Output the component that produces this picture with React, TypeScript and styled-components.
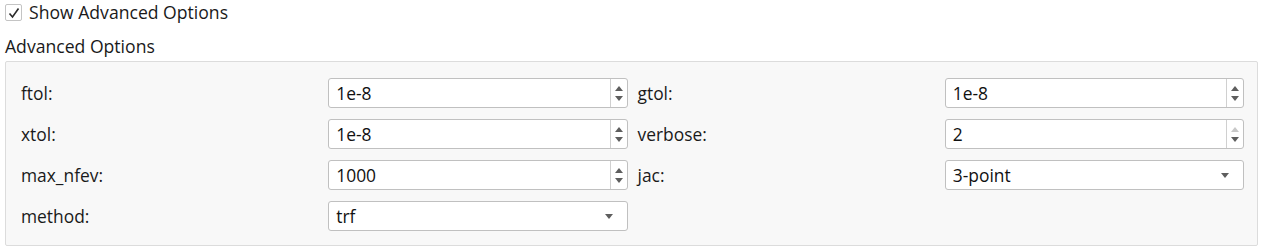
import React from "react";
import styled, { createGlobalStyle } from "styled-components";

const Global = createGlobalStyle`
  html, body { margin: 0; padding: 0; background: #ffffff; }
  body { font-family: "Open Sans", "Noto Sans", sans-serif; color: #1a1a1a; }
`;

const Page = styled.div`
  display: flex;
  flex-direction: column;
  padding: 4px 5px 0 5px;
  width: 1263px;
  box-sizing: border-box;
`;

const CheckRow = styled.label`
  display: flex;
  align-items: center;
  gap: 7px;
  height: 17px;
  font-size: 17.6px;
  line-height: 17px;
`;

const CheckBox = styled.span`
  width: 15px;
  height: 15px;
  border: 1px solid #c4c4c4;
  border-radius: 2px;
  background: #ffffff;
  display: flex;
  align-items: center;
  justify-content: center;
  flex-shrink: 0;
`;

const GroupTitle = styled.div`
  font-size: 17.6px;
  line-height: 20px;
  margin-top: 15px;
  height: 22px;
`;

const GroupBox = styled.div`
  margin-top: 3px;
  width: 1253px;
  box-sizing: border-box;
  border: 1px solid #dcdcdc;
  border-radius: 2px;
  background: #f8f8f8;
  padding: 16px 13px 14px 14px;
  display: grid;
  grid-template-columns: repeat(4, 1fr);
  column-gap: 9px;
  row-gap: 11px;
  align-items: center;
`;

const FieldLabel = styled.div`
  font-size: 17.4px;
  padding-left: 1px;
`;

const Field = styled.div`
  height: 30px;
  box-sizing: border-box;
  border: 1px solid #c0c0c0;
  border-radius: 3px;
  background: #ffffff;
  display: flex;
  align-items: stretch;
`;

const FieldText = styled.div`
  flex: 1;
  display: flex;
  align-items: center;
  padding-left: 7px;
  font-size: 17.4px;
  color: #111;
`;

const Spin = styled.div`
  width: 16px;
  border-left: 1px solid #d0d0d0;
  display: flex;
  flex-direction: column;
  align-items: center;
  justify-content: center;
  gap: 5px;
`;

const Arrow = styled.span<{ $dir: "up" | "down"; $disabled?: boolean }>`
  width: 0;
  height: 0;
  border-left: 4px solid transparent;
  border-right: 4px solid transparent;
  ${(p) =>
    p.$dir === "up"
      ? `border-bottom: 5px solid ${p.$disabled ? "#c8c8c8" : "#5e5e5e"};`
      : `border-top: 5px solid ${p.$disabled ? "#c8c8c8" : "#5e5e5e"};`}
`;

const ComboArrow = styled.div`
  width: 36px;
  display: flex;
  align-items: center;
  justify-content: center;
`;

type SpinProps = { value: string; upDisabled?: boolean };
const SpinBox = ({ value, upDisabled }: SpinProps) => (
  <Field>
    <FieldText>{value}</FieldText>
    <Spin>
      <Arrow $dir="up" $disabled={upDisabled} />
      <Arrow $dir="down" />
    </Spin>
  </Field>
);

const Combo = ({ value }: { value: string }) => (
  <Field>
    <FieldText>{value}</FieldText>
    <ComboArrow>
      <Arrow $dir="down" />
    </ComboArrow>
  </Field>
);

const Empty = styled.div``;

export default function App() {
  return (
    <>
      <Global />
      <Page>
        <CheckRow>
          <CheckBox>
            <svg width="12" height="12" viewBox="0 0 12 12">
              <path d="M1.5 6.5 L4.5 10 L10.5 1.5" fill="none" stroke="#2a2a2a" strokeWidth="1.6" />
            </svg>
          </CheckBox>
          Show Advanced Options
        </CheckRow>
        <GroupTitle>Advanced Options</GroupTitle>
        <GroupBox>
          <FieldLabel>ftol:</FieldLabel>
          <SpinBox value="1e-8" />
          <FieldLabel>gtol:</FieldLabel>
          <SpinBox value="1e-8" />

          <FieldLabel>xtol:</FieldLabel>
          <SpinBox value="1e-8" />
          <FieldLabel>verbose:</FieldLabel>
          <SpinBox value="2" upDisabled />

          <FieldLabel>max_nfev:</FieldLabel>
          <SpinBox value="1000" />
          <FieldLabel>jac:</FieldLabel>
          <Combo value="3-point" />

          <FieldLabel>method:</FieldLabel>
          <Combo value="trf" />
          <Empty />
          <Empty />
        </GroupBox>
      </Page>
    </>
  );
}
